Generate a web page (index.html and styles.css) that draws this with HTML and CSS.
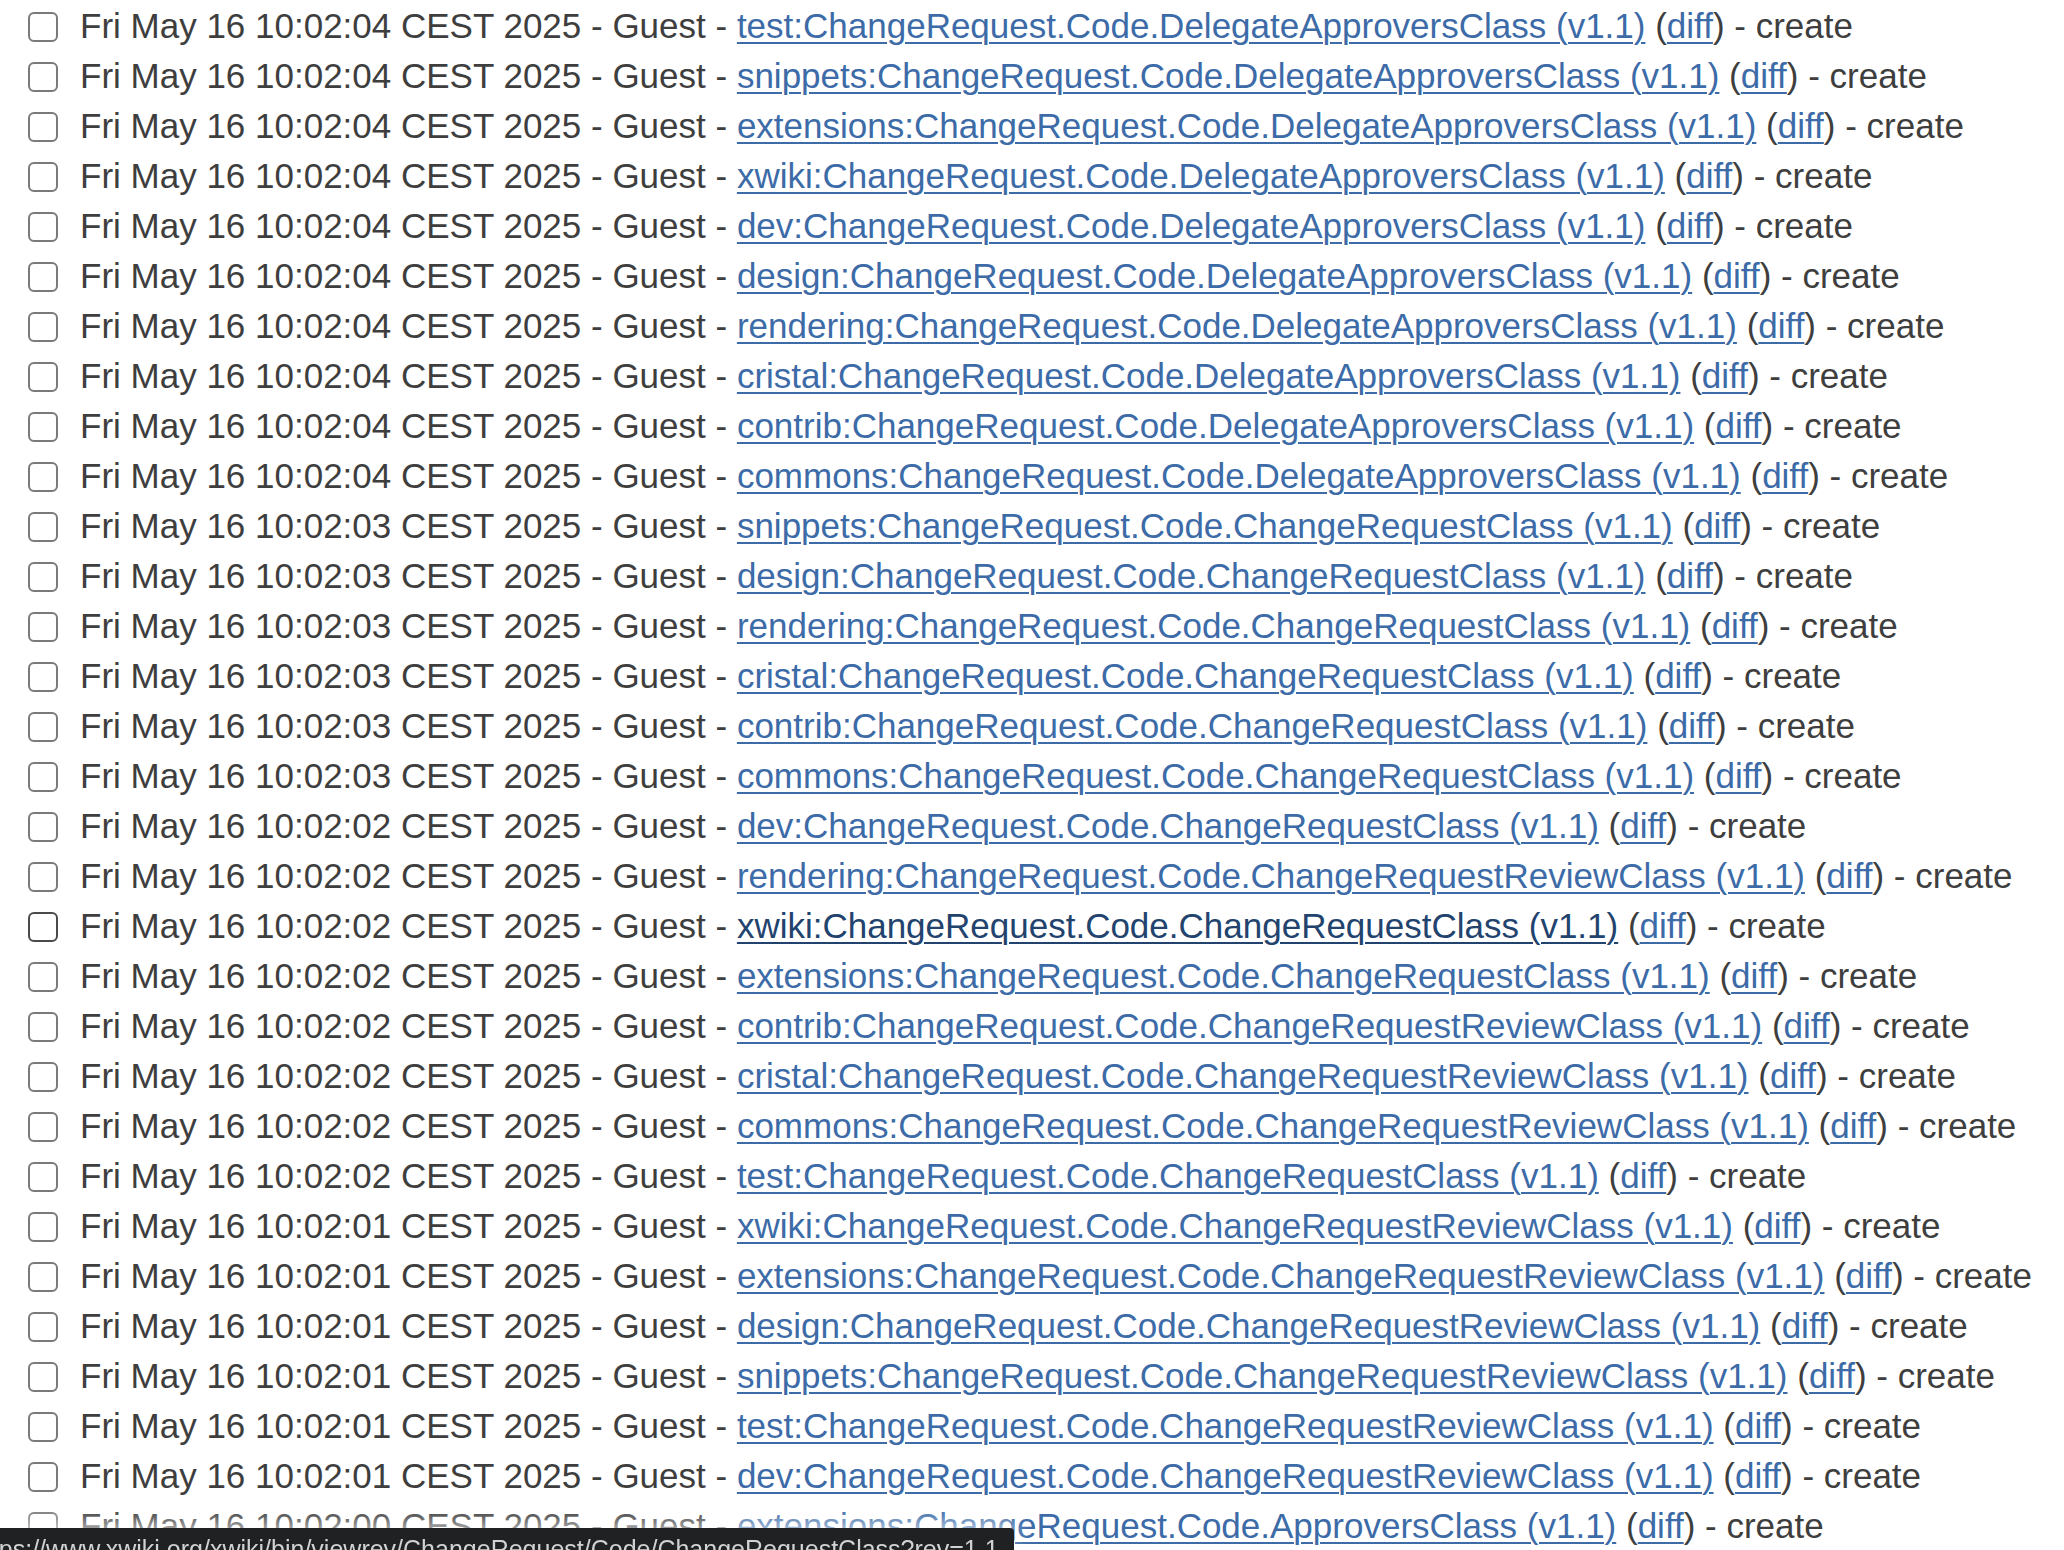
FILE: index.html
```html
<!DOCTYPE html>
<html lang="en">
<head>
  <meta charset="UTF-8">
  <title>Recent changes</title>
  <link rel="stylesheet" href="styles.css">
</head>
<body>

  <ul class="history">
    <li><input type="checkbox"><span class="entry">Fri May 16 10:02:04 CEST 2025 - Guest - <a href="#">test:ChangeRequest.Code.DelegateApproversClass (v1.1)</a> (<a href="#">diff</a>) - create</span></li>
    <li><input type="checkbox"><span class="entry">Fri May 16 10:02:04 CEST 2025 - Guest - <a href="#">snippets:ChangeRequest.Code.DelegateApproversClass (v1.1)</a> (<a href="#">diff</a>) - create</span></li>
    <li><input type="checkbox"><span class="entry">Fri May 16 10:02:04 CEST 2025 - Guest - <a href="#">extensions:ChangeRequest.Code.DelegateApproversClass (v1.1)</a> (<a href="#">diff</a>) - create</span></li>
    <li><input type="checkbox"><span class="entry">Fri May 16 10:02:04 CEST 2025 - Guest - <a href="#">xwiki:ChangeRequest.Code.DelegateApproversClass (v1.1)</a> (<a href="#">diff</a>) - create</span></li>
    <li><input type="checkbox"><span class="entry">Fri May 16 10:02:04 CEST 2025 - Guest - <a href="#">dev:ChangeRequest.Code.DelegateApproversClass (v1.1)</a> (<a href="#">diff</a>) - create</span></li>
    <li><input type="checkbox"><span class="entry">Fri May 16 10:02:04 CEST 2025 - Guest - <a href="#">design:ChangeRequest.Code.DelegateApproversClass (v1.1)</a> (<a href="#">diff</a>) - create</span></li>
    <li><input type="checkbox"><span class="entry">Fri May 16 10:02:04 CEST 2025 - Guest - <a href="#">rendering:ChangeRequest.Code.DelegateApproversClass (v1.1)</a> (<a href="#">diff</a>) - create</span></li>
    <li><input type="checkbox"><span class="entry">Fri May 16 10:02:04 CEST 2025 - Guest - <a href="#">cristal:ChangeRequest.Code.DelegateApproversClass (v1.1)</a> (<a href="#">diff</a>) - create</span></li>
    <li><input type="checkbox"><span class="entry">Fri May 16 10:02:04 CEST 2025 - Guest - <a href="#">contrib:ChangeRequest.Code.DelegateApproversClass (v1.1)</a> (<a href="#">diff</a>) - create</span></li>
    <li><input type="checkbox"><span class="entry">Fri May 16 10:02:04 CEST 2025 - Guest - <a href="#">commons:ChangeRequest.Code.DelegateApproversClass (v1.1)</a> (<a href="#">diff</a>) - create</span></li>
    <li><input type="checkbox"><span class="entry">Fri May 16 10:02:03 CEST 2025 - Guest - <a href="#">snippets:ChangeRequest.Code.ChangeRequestClass (v1.1)</a> (<a href="#">diff</a>) - create</span></li>
    <li><input type="checkbox"><span class="entry">Fri May 16 10:02:03 CEST 2025 - Guest - <a href="#">design:ChangeRequest.Code.ChangeRequestClass (v1.1)</a> (<a href="#">diff</a>) - create</span></li>
    <li><input type="checkbox"><span class="entry">Fri May 16 10:02:03 CEST 2025 - Guest - <a href="#">rendering:ChangeRequest.Code.ChangeRequestClass (v1.1)</a> (<a href="#">diff</a>) - create</span></li>
    <li><input type="checkbox"><span class="entry">Fri May 16 10:02:03 CEST 2025 - Guest - <a href="#">cristal:ChangeRequest.Code.ChangeRequestClass (v1.1)</a> (<a href="#">diff</a>) - create</span></li>
    <li><input type="checkbox"><span class="entry">Fri May 16 10:02:03 CEST 2025 - Guest - <a href="#">contrib:ChangeRequest.Code.ChangeRequestClass (v1.1)</a> (<a href="#">diff</a>) - create</span></li>
    <li><input type="checkbox"><span class="entry">Fri May 16 10:02:03 CEST 2025 - Guest - <a href="#">commons:ChangeRequest.Code.ChangeRequestClass (v1.1)</a> (<a href="#">diff</a>) - create</span></li>
    <li><input type="checkbox"><span class="entry">Fri May 16 10:02:02 CEST 2025 - Guest - <a href="#">dev:ChangeRequest.Code.ChangeRequestClass (v1.1)</a> (<a href="#">diff</a>) - create</span></li>
    <li><input type="checkbox"><span class="entry">Fri May 16 10:02:02 CEST 2025 - Guest - <a href="#">rendering:ChangeRequest.Code.ChangeRequestReviewClass (v1.1)</a> (<a href="#">diff</a>) - create</span></li>
    <li class="hover"><input type="checkbox"><span class="entry">Fri May 16 10:02:02 CEST 2025 - Guest - <a href="#" class="active">xwiki:ChangeRequest.Code.ChangeRequestClass (v1.1)</a> (<a href="#">diff</a>) - create</span></li>
    <li><input type="checkbox"><span class="entry">Fri May 16 10:02:02 CEST 2025 - Guest - <a href="#">extensions:ChangeRequest.Code.ChangeRequestClass (v1.1)</a> (<a href="#">diff</a>) - create</span></li>
    <li><input type="checkbox"><span class="entry">Fri May 16 10:02:02 CEST 2025 - Guest - <a href="#">contrib:ChangeRequest.Code.ChangeRequestReviewClass (v1.1)</a> (<a href="#">diff</a>) - create</span></li>
    <li><input type="checkbox"><span class="entry">Fri May 16 10:02:02 CEST 2025 - Guest - <a href="#">cristal:ChangeRequest.Code.ChangeRequestReviewClass (v1.1)</a> (<a href="#">diff</a>) - create</span></li>
    <li><input type="checkbox"><span class="entry">Fri May 16 10:02:02 CEST 2025 - Guest - <a href="#">commons:ChangeRequest.Code.ChangeRequestReviewClass (v1.1)</a> (<a href="#">diff</a>) - create</span></li>
    <li><input type="checkbox"><span class="entry">Fri May 16 10:02:02 CEST 2025 - Guest - <a href="#">test:ChangeRequest.Code.ChangeRequestClass (v1.1)</a> (<a href="#">diff</a>) - create</span></li>
    <li><input type="checkbox"><span class="entry">Fri May 16 10:02:01 CEST 2025 - Guest - <a href="#">xwiki:ChangeRequest.Code.ChangeRequestReviewClass (v1.1)</a> (<a href="#">diff</a>) - create</span></li>
    <li><input type="checkbox"><span class="entry">Fri May 16 10:02:01 CEST 2025 - Guest - <a href="#">extensions:ChangeRequest.Code.ChangeRequestReviewClass (v1.1)</a> (<a href="#">diff</a>) - create</span></li>
    <li><input type="checkbox"><span class="entry">Fri May 16 10:02:01 CEST 2025 - Guest - <a href="#">design:ChangeRequest.Code.ChangeRequestReviewClass (v1.1)</a> (<a href="#">diff</a>) - create</span></li>
    <li><input type="checkbox"><span class="entry">Fri May 16 10:02:01 CEST 2025 - Guest - <a href="#">snippets:ChangeRequest.Code.ChangeRequestReviewClass (v1.1)</a> (<a href="#">diff</a>) - create</span></li>
    <li><input type="checkbox"><span class="entry">Fri May 16 10:02:01 CEST 2025 - Guest - <a href="#">test:ChangeRequest.Code.ChangeRequestReviewClass (v1.1)</a> (<a href="#">diff</a>) - create</span></li>
    <li><input type="checkbox"><span class="entry">Fri May 16 10:02:01 CEST 2025 - Guest - <a href="#">dev:ChangeRequest.Code.ChangeRequestReviewClass (v1.1)</a> (<a href="#">diff</a>) - create</span></li>
    <li><input type="checkbox"><span class="entry">Fri May 16 10:02:00 CEST 2025 - Guest - <a href="#">extensions:ChangeRequest.Code.ApproversClass (v1.1)</a> (<a href="#">diff</a>) - create</span></li>
  </ul>

  <div class="status-bar"><span class="status-url">https://www.xwiki.org/xwiki/bin/viewrev/ChangeRequest/Code/ChangeRequestClass?rev=1.1</span></div>

</body>
</html>
```

FILE: styles.css
```css
body {
  margin: 0;
  background: #ffffff;
  color: #3e3e3e;
  font-family: "Liberation Sans", Arial, Helvetica, sans-serif;
  font-size: 35px;
  overflow: hidden;
}
.history {
  list-style: none;
  margin: 0;
  padding: 1px 0 0 28px;
}
.history li {
  display: flex;
  align-items: center;
  gap: 22px;
  height: 50px;
  line-height: 50px;
  white-space: nowrap;
}
.history input[type="checkbox"] {
  appearance: none;
  -webkit-appearance: none;
  flex: none;
  width: 30px;
  height: 30px;
  margin: 1px 0 0 0;
  border: 2px solid #7a7a7a;
  border-radius: 6px;
  background: #ffffff;
  box-sizing: border-box;
}
.history li.hover input[type="checkbox"] {
  border-color: #4a4a4a;
}
.history a {
  color: #3c6ba8;
  text-decoration: underline;
  text-decoration-thickness: 2px;
  text-underline-offset: 4px;
}
.history a.active {
  color: #22436e;
}
.status-bar {
  position: fixed;
  left: 0;
  bottom: 0;
  width: 1014px;
  height: 22px;
  overflow: hidden;
  background: #202122;
  box-shadow: 0 -6px 18px rgba(255, 255, 255, 0.7);
  border-top-right-radius: 4px;
}
.status-url {
  display: block;
  margin-left: -29px;
  padding-top: 9px;
  font-size: 25px;
  line-height: 25px;
  color: #d2d2d2;
  white-space: nowrap;
}
```
